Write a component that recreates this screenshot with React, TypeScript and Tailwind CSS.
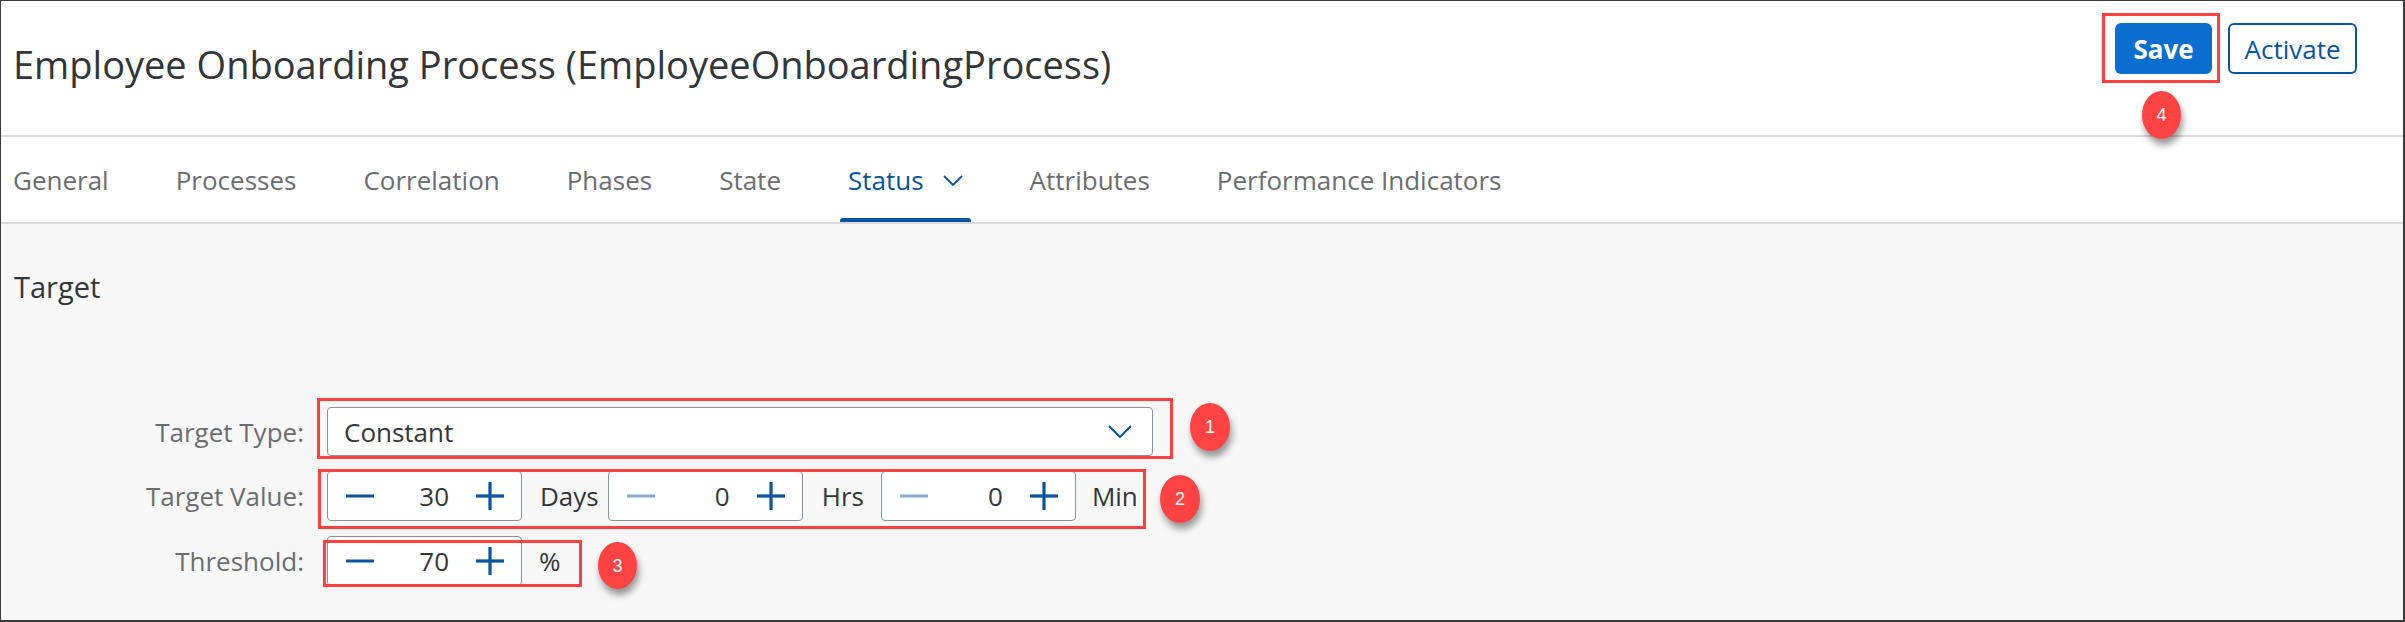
import React from "react";

const tabs = ["General", "Processes", "Correlation", "Phases", "State", "Status", "Attributes", "Performance Indicators"];

function Minus({ disabled }: { disabled?: boolean }) {
  return (
    <svg width="28" height="28" viewBox="0 0 28 28" className="shrink-0">
      <rect x="0" y="12.5" width="28" height="3" fill={disabled ? "#88acd2" : "#0854a0"} />
    </svg>
  );
}

function Plus() {
  return (
    <svg width="28" height="28" viewBox="0 0 28 28" className="shrink-0">
      <rect x="0" y="12.4" width="28" height="3.2" fill="#0854a0" />
      <rect x="12.4" y="0" width="3.2" height="28" fill="#0854a0" />
    </svg>
  );
}

function Stepper({ value, disabled }: { value: string; disabled?: boolean }) {
  return (
    <div className="flex h-[50px] w-[195px] shrink-0 items-center rounded-[4px] border-[1.5px] border-[#89919a] bg-white pl-[18px] pr-[17px]">
      <Minus disabled={disabled} />
      <span className="flex-1 pr-[27px] text-right text-[26px] leading-none text-[#32363a]">{value}</span>
      <Plus />
    </div>
  );
}

function Badge({ n, className }: { n: string; className: string }) {
  return (
    <div
      className={
        "absolute flex items-center justify-center rounded-[50%] bg-[#ff4343] text-[18px] leading-none text-white shadow-[2px_6px_7px_rgba(0,0,0,0.4)] " +
        className
      }
      style={{ fontFamily: '"Liberation Sans", Arial, sans-serif' }}
    >
      {n}
    </div>
  );
}

export default function App() {
  return (
    <div
      className="relative h-[622px] w-[2405px] overflow-hidden border-b-2 border-l border-r-2 border-t border-[#3c3c3c] bg-[#f7f7f7]"
      style={{ fontFamily: '"Open Sans", "Noto Sans", sans-serif' }}
    >
      {/* header */}
      <div className="flex h-[136px] items-start justify-between border-b-2 border-[#d9d9d9] bg-white pl-[12px] pr-[46px]">
        <h1 className="pt-[44px] text-[38px] leading-none text-[#32363a]">
          Employee Onboarding Process (EmployeeOnboardingProcess)
        </h1>
        <div className="mt-[22px] flex gap-[16px]">
          <button className="flex h-[51px] w-[97px] items-center justify-center rounded-[6px] bg-[#0a6ed1] text-[26px] font-bold leading-none text-white">
            Save
          </button>
          <button className="flex h-[51px] w-[129px] items-center justify-center rounded-[6px] border-2 border-[#0854a0] bg-white text-[26px] leading-none text-[#0854a0]">
            Activate
          </button>
        </div>
      </div>

      {/* tabs */}
      <div className="flex gap-[51px] border-b-2 border-[#d9d9d9] bg-white pl-[4px]">
        {tabs.map((t) => {
          const active = t === "Status";
          return (
            <div key={t} className="flex flex-col">
              <div
                className={
                  "flex items-center px-[8px] pb-[25px] pt-[30px] text-[26px] leading-none " +
                  (active ? "text-[#0854a0]" : "text-[#6a6d70]")
                }
              >
                {t}
                {active && (
                  <svg width="20" height="11" viewBox="0 0 20 11" className="ml-[19px]">
                    <path d="M1 1 L10 10 L19 1" fill="none" stroke="#0854a0" strokeWidth="1.8" />
                  </svg>
                )}
              </div>
              <div className={"h-[4px] rounded-t-[3px] " + (active ? "bg-[#0854a0]" : "bg-transparent")} />
            </div>
          );
        })}
      </div>

      {/* content */}
      <div className="pl-[13px] pt-[48px]">
        <h2 className="text-[29px] leading-none text-[#32363a]">Target</h2>
      </div>

      <div className="mt-[106px] flex flex-col gap-[15px]">
        <div className="flex items-center">
          <span className="w-[303px] text-right text-[26px] leading-none text-[#6a6d70]">Target Type:</span>
          <div className="ml-[23px] flex h-[49px] w-[826px] items-center justify-between rounded-[4px] border-[1.5px] border-[#89919a] bg-white pl-[16px] pr-[20px]">
            <span className="text-[26px] leading-none text-[#32363a]">Constant</span>
            <svg width="24" height="13" viewBox="0 0 24 13">
              <path d="M1 1 L12 12 L23 1" fill="none" stroke="#0854a0" strokeWidth="2" />
            </svg>
          </div>
        </div>

        <div className="flex items-center">
          <span className="w-[303px] text-right text-[26px] leading-none text-[#6a6d70]">Target Value:</span>
          <div className="ml-[23px] flex items-center text-[26px] leading-none text-[#32363a]">
            <Stepper value="30" />
            <span className="ml-[18px] mr-[9px]">Days</span>
            <Stepper value="0" disabled />
            <span className="ml-[19px] mr-[17px]">Hrs</span>
            <Stepper value="0" disabled />
            <span className="ml-[16px]">Min</span>
          </div>
        </div>

        <div className="flex items-center">
          <span className="w-[303px] text-right text-[26px] leading-none text-[#6a6d70]">Threshold:</span>
          <div className="ml-[23px] flex items-center text-[26px] leading-none text-[#32363a]">
            <Stepper value="70" />
            <span className="ml-[17px]">%</span>
          </div>
        </div>
      </div>

      {/* annotations */}
      <div className="absolute left-[316px] top-[397px] h-[61px] w-[856px] border-[3px] border-[#ff4040]" />
      <div className="absolute left-[317px] top-[468px] h-[60px] w-[828px] border-[3px] border-[#ff4040]" />
      <div className="absolute left-[322px] top-[539px] h-[47px] w-[259px] border-[3px] border-[#ff4040]" />
      <div className="absolute left-[2101px] top-[12px] h-[70px] w-[118px] border-[3px] border-[#ff4040]" />

      <Badge n="1" className="left-[1189px] top-[402px] h-[48px] w-[40px]" />
      <Badge n="2" className="left-[1159px] top-[474px] h-[48px] w-[40px]" />
      <Badge n="3" className="left-[597px] top-[541px] h-[47px] w-[39px]" />
      <Badge n="4" className="left-[2141px] top-[90px] h-[48px] w-[39px]" />
    </div>
  );
}
